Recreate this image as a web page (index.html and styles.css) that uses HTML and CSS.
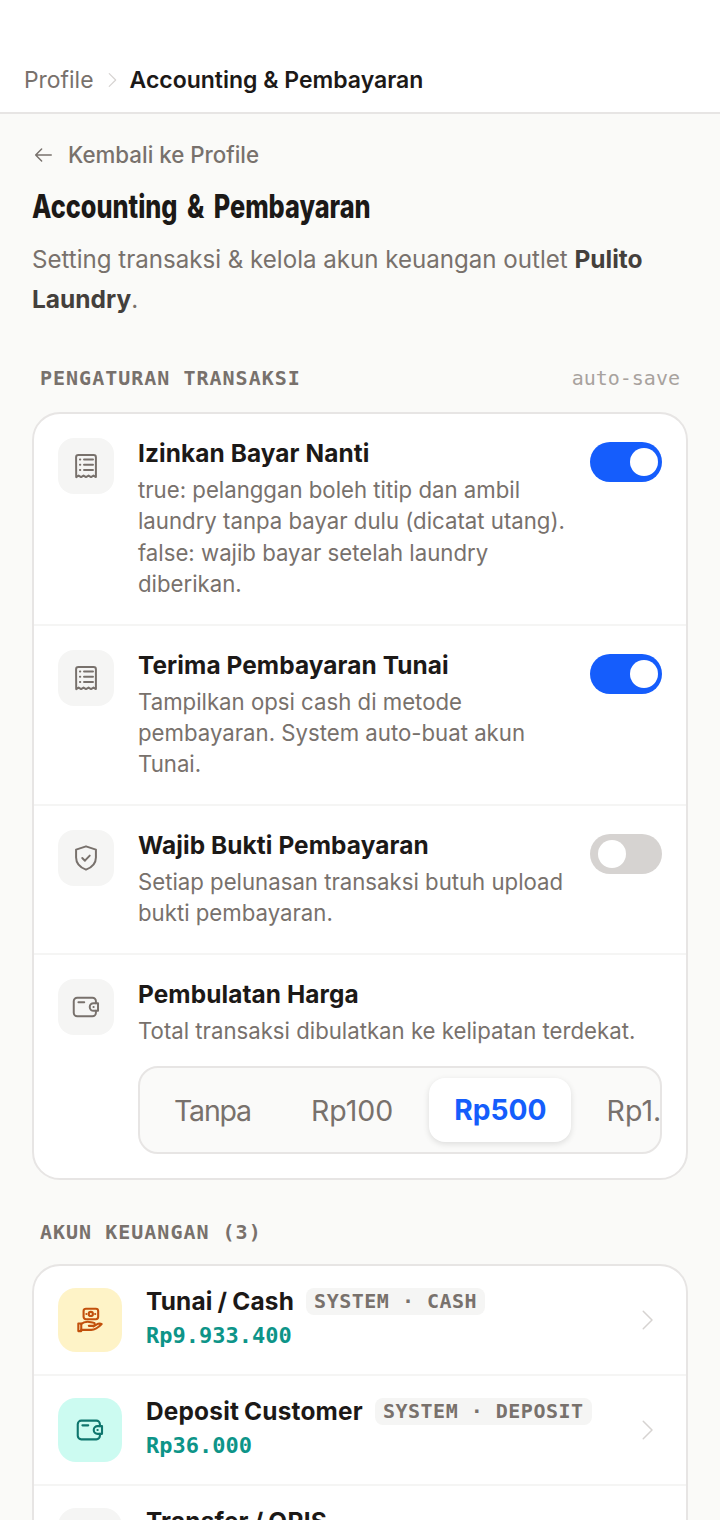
FILE: index.html
```html
<!DOCTYPE html>
<html lang="id">
    <head>
        <title>Accounting &amp; Pembayaran</title>
        <meta charset="UTF-8">
        <meta name="viewport" content="width=device-width, initial-scale=1.0">
        <link rel="stylesheet" href="styles.css">
    </head>
    <body>
        <svg class="defs" width="0" height="0">
            <symbol id="i-receipt" viewBox="0 0 24 24">
                <path d="M3.5 4.5a2 2 0 0 1 2-2h13a2 2 0 0 1 2 2v17l-2.100-1.300-2.100 1.300-2.100-1.300-2.200 1.300-2.100-1.300-2.100 1.300-2.100-1.300-2.100 1.300z"/>
                <path d="M10.300 6.500h7.700M10.300 11h7.700M10.300 15.500h7.700M6.800 6.500h.3M6.800 11h.3M6.800 15.500h.3"/>
            </symbol>
            <symbol id="i-shield" viewBox="0 0 24 24">
                <path d="M12 2l8.500 2.800v6.700c0 5-3.500 8.500-8.500 10.500-5-2-8.500-5.500-8.500-10.500V4.800z"/>
                <path d="M8.800 12l2.300 2.300 4.100-4.300"/>
            </symbol>
            <symbol id="i-wallet" viewBox="0 0 24 24">
                <path d="M20.500 8.700V7a3 3 0 0 0-3-3h-13a3 3 0 0 0-3 3v10a3 3 0 0 0 3 3h13a3 3 0 0 0 3-3v-1.700"/>
                <path d="M18.500 8.700h3.800v6.600h-3.800a3.300 3.300 0 0 1 0-6.600z"/>
                <path d="M5.500 8h5M18.400 12h.2"/>
            </symbol>
            <symbol id="i-cash" viewBox="0 0 24 24">
                <rect x="6.500" y="2.300" width="12.500" height="9" rx="2"/>
                <circle cx="12.700" cy="6.800" r="1.800"/>
                <path d="M8.900 6.800h.1M16.400 6.800h.1"/>
                <path d="M2 15h2.500v6.500H2z"/>
                <path d="M4.500 15.500C6 14 8 13.500 10 13.500c2 0 3.500.8 5 .8s1.500 2.700-.5 2.700H11"/>
                <path d="M4.500 20.500H13c3 0 6-1.800 9-5-1.500-1-3-.5-4.500.5L15 17.500"/>
            </symbol>
            <symbol id="i-chev" viewBox="0 0 24 24">
                <path d="M9 5l7 7-7 7"/>
            </symbol>
        </svg>

        <div class="page">
            <header class="topbar">
                <span class="crumb">Profile</span>
                <svg class="crumb-sep"><use href="#i-chev"/></svg>
                <span class="crumb-now">Accounting &amp; Pembayaran</span>
            </header>

            <main class="content">
                <a class="back">
                    <svg class="back-arrow" viewBox="0 0 24 24"><path d="M21 12H4M10.500 5.500L4 12l6.500 6.500"/></svg>
                    Kembali ke Profile
                </a>
                <h1 class="title">Accounting &amp; Pembayaran</h1>
                <p class="lead">Setting transaksi &amp; kelola akun keuangan outlet <b>Pulito Laundry</b>.</p>

                <div class="sec-head">
                    <span class="sec-label">PENGATURAN TRANSAKSI</span>
                    <span class="sec-note">auto-save</span>
                </div>

                <section class="card">
                    <div class="row">
                        <div class="icon-box"><svg class="icon"><use href="#i-receipt"/></svg></div>
                        <div class="row-main">
                            <div class="row-title">Izinkan Bayar Nanti</div>
                            <div class="row-desc">true: pelanggan boleh titip dan ambil laundry tanpa bayar dulu (dicatat utang). false: wajib bayar setelah laundry diberikan.</div>
                        </div>
                        <div class="toggle on"><i class="knob"></i></div>
                    </div>
                    <div class="row">
                        <div class="icon-box"><svg class="icon"><use href="#i-receipt"/></svg></div>
                        <div class="row-main">
                            <div class="row-title">Terima Pembayaran Tunai</div>
                            <div class="row-desc">Tampilkan opsi cash di metode pembayaran. System auto-buat akun Tunai.</div>
                        </div>
                        <div class="toggle on"><i class="knob"></i></div>
                    </div>
                    <div class="row">
                        <div class="icon-box"><svg class="icon"><use href="#i-shield"/></svg></div>
                        <div class="row-main">
                            <div class="row-title">Wajib Bukti Pembayaran</div>
                            <div class="row-desc">Setiap pelunasan transaksi butuh upload bukti pembayaran.</div>
                        </div>
                        <div class="toggle"><i class="knob"></i></div>
                    </div>
                    <div class="row">
                        <div class="icon-box"><svg class="icon"><use href="#i-wallet"/></svg></div>
                        <div class="row-main">
                            <div class="row-title">Pembulatan Harga</div>
                            <div class="row-desc">Total transaksi dibulatkan ke kelipatan terdekat.</div>
                            <div class="seg">
                                <span class="seg-item">Tanpa</span>
                                <span class="seg-item">Rp100</span>
                                <span class="seg-item active">Rp500</span>
                                <span class="seg-item">Rp1.000</span>
                            </div>
                        </div>
                    </div>
                </section>

                <div class="sec-head sec-head-2">
                    <span class="sec-label">AKUN KEUANGAN (3)</span>
                </div>

                <section class="card">
                    <div class="acc">
                        <div class="acc-icon amber"><svg class="icon-lg"><use href="#i-cash"/></svg></div>
                        <div class="acc-main">
                            <div class="acc-top"><span class="acc-name">Tunai / Cash</span><span class="badge">SYSTEM · CASH</span></div>
                            <div class="acc-amount">Rp9.933.400</div>
                        </div>
                        <svg class="acc-chev"><use href="#i-chev"/></svg>
                    </div>
                    <div class="acc">
                        <div class="acc-icon mint"><svg class="icon-lg"><use href="#i-wallet"/></svg></div>
                        <div class="acc-main">
                            <div class="acc-top"><span class="acc-name">Deposit Customer</span><span class="badge">SYSTEM · DEPOSIT</span></div>
                            <div class="acc-amount">Rp36.000</div>
                        </div>
                        <svg class="acc-chev"><use href="#i-chev"/></svg>
                    </div>
                    <div class="acc">
                        <div class="acc-icon grey"></div>
                        <div class="acc-main">
                            <div class="acc-top"><span class="acc-name">Transfer / QRIS</span></div>
                        </div>
                    </div>
                </section>
            </main>
        </div>
    </body>
</html>
```

FILE: styles.css
```css
html,body{margin:0; padding:0;}

body{
    background:#fafaf8;
    color:#1c1917;
    font-family:Inter, "Liberation Sans", sans-serif;
}

.defs{position:absolute;}

svg{fill:none; stroke:currentColor; stroke-linecap:round; stroke-linejoin:round;}

.page{height:1520px; overflow:hidden;}

/* top bar */
.topbar{
    height:114px;
    box-sizing:border-box;
    border-bottom:2px solid #e7e5e4;
    background:#fff;
    padding:64px 24px 0;
    display:flex;
    align-items:flex-start;
    font-size:23px;
    line-height:32px;
}

.crumb{color:#78716c; font-weight:400; font-size:22.9px;}
.crumb-sep{width:22px; height:22px; margin:5px 7px 0 7px; color:#d6d3d1; stroke-width:1.3;}
.crumb-now{font-weight:600; color:#1c1917;}

/* intro */
.content{padding:25px 32px 0;}

.back{
    display:flex;
    align-items:center;
    gap:14px;
    font-size:22.3px;
    line-height:31px;
    font-weight:500;
    color:#78716c;
}
.back-arrow{width:22px; height:22px; stroke-width:1.6;}

.title{
    margin:15px 0 0;
    font-size:32px;
    line-height:44px;
    font-weight:800;
    word-spacing:5px;
    color:#1c1917;
    white-space:nowrap;
    transform:scaleX(.79);
    transform-origin:left center;
}

.lead{
    margin:11px 0 0;
    font-size:24.1px;
    line-height:40px;
    color:#78716c;
}
.lead b{color:#44403c; font-size:24.5px; line-height:1; font-weight:700;}

/* section headings */
.sec-head{
    display:flex;
    justify-content:space-between;
    align-items:center;
    padding:0 8px;
    margin:42px 0 18px;
    height:32px;
    font-family:"DejaVu Sans Mono", monospace;
}
.sec-head-2{margin:36px 0 16px;}
.sec-label{font-size:20px; font-weight:700; letter-spacing:1px; color:#78716c;}
.sec-note{font-size:20px; color:#a8a29e;}

/* settings card */
.card{
    background:#fff;
    border:2px solid #e7e5e4;
    border-radius:28px;
    overflow:hidden;
}

.row{
    display:flex;
    gap:24px;
    padding:24px;
    border-bottom:2px solid #f5f5f4;
}
.row:last-child{border-bottom:0;}

.icon-box{
    flex:none;
    width:56px;
    height:56px;
    border-radius:16px;
    background:#f5f5f4;
    color:#78716c;
    display:flex;
    align-items:center;
    justify-content:center;
}
.icon{width:28px; height:28px; stroke-width:1.7;}

.row-main{flex:1; min-width:0; margin-right:-6px;}
.row-title{font-size:24.4px; line-height:30px; font-weight:700; letter-spacing:.1px; color:#1c1917;}
.row-desc{margin-top:6px; font-size:22.2px; line-height:31.4px; color:#78716c;}

.toggle{
    flex:none;
    width:72px;
    height:40px;
    margin-top:4px;
    border-radius:20px;
    background:#d6d3d1;
    padding:6px 4px 6px 8px;
    box-sizing:border-box;
    display:flex;
}
.toggle.on{background:#155dfc; justify-content:flex-end;}
.knob{width:28px; height:28px; border-radius:50%; background:#fff;}

/* rounding picker */
.seg{
    display:flex;
    gap:12px;
    margin:20px 6px 0 0;
    height:88px;
    box-sizing:border-box;
    padding:10px;
    border:2px solid #e7e5e4;
    border-radius:20px;
    background:#fafaf9;
    overflow:hidden;
    font-size:28.5px;
    color:#78716c;
}
.seg-item{
    flex:none;
    padding:0 24px;
    border-radius:16px;
    display:flex;
    align-items:center;
}
.seg-item:first-child{letter-spacing:-1.2px;}
.seg-item.active{
    padding:0 24px 0 25px;
    background:#fff;
    color:#155dfc;
    font-size:28.2px;
    font-weight:700;
    box-shadow:0 2px 6px rgba(0,0,0,0.12);
}

/* accounts */
.acc{
    display:flex;
    gap:24px;
    align-items:center;
    padding:22px 24px;
    height:64px;
    border-bottom:2px solid #f5f5f4;
}
.acc:last-child{border-bottom:0;}
.acc-icon{
    flex:none;
    width:64px;
    height:64px;
    border-radius:18px;
    display:flex;
    align-items:center;
    justify-content:center;
}
.amber{background:#fef3c7; color:#c2500c;}
.mint{background:#ccfbf1; color:#0f766e;}
.grey{background:#f5f5f4;}
.icon-lg{width:28px; height:28px; stroke-width:1.8;}

.acc-main{flex:1; min-width:0; align-self:flex-start;}
.acc-top{display:flex; align-items:center; gap:12px;}
.acc-name{font-size:24.4px; line-height:27px; font-weight:700; letter-spacing:.2px; word-spacing:-1px;}
.badge{
    padding:0 8px;
    border-radius:8px;
    background:#f5f5f4;
    font-family:"DejaVu Sans Mono", monospace;
    font-size:20px;
    line-height:27px;
    letter-spacing:.5px;
    font-weight:700;
    color:#78716c;
}
.acc-amount{
    margin-top:6px;
    font-family:"DejaVu Sans Mono", monospace;
    font-size:22px;
    line-height:30px;
    font-weight:700;
    color:#0d9488;
}
.acc-chev{flex:none; width:30px; height:30px; color:#d6d3d1; stroke-width:1.2;}
```
